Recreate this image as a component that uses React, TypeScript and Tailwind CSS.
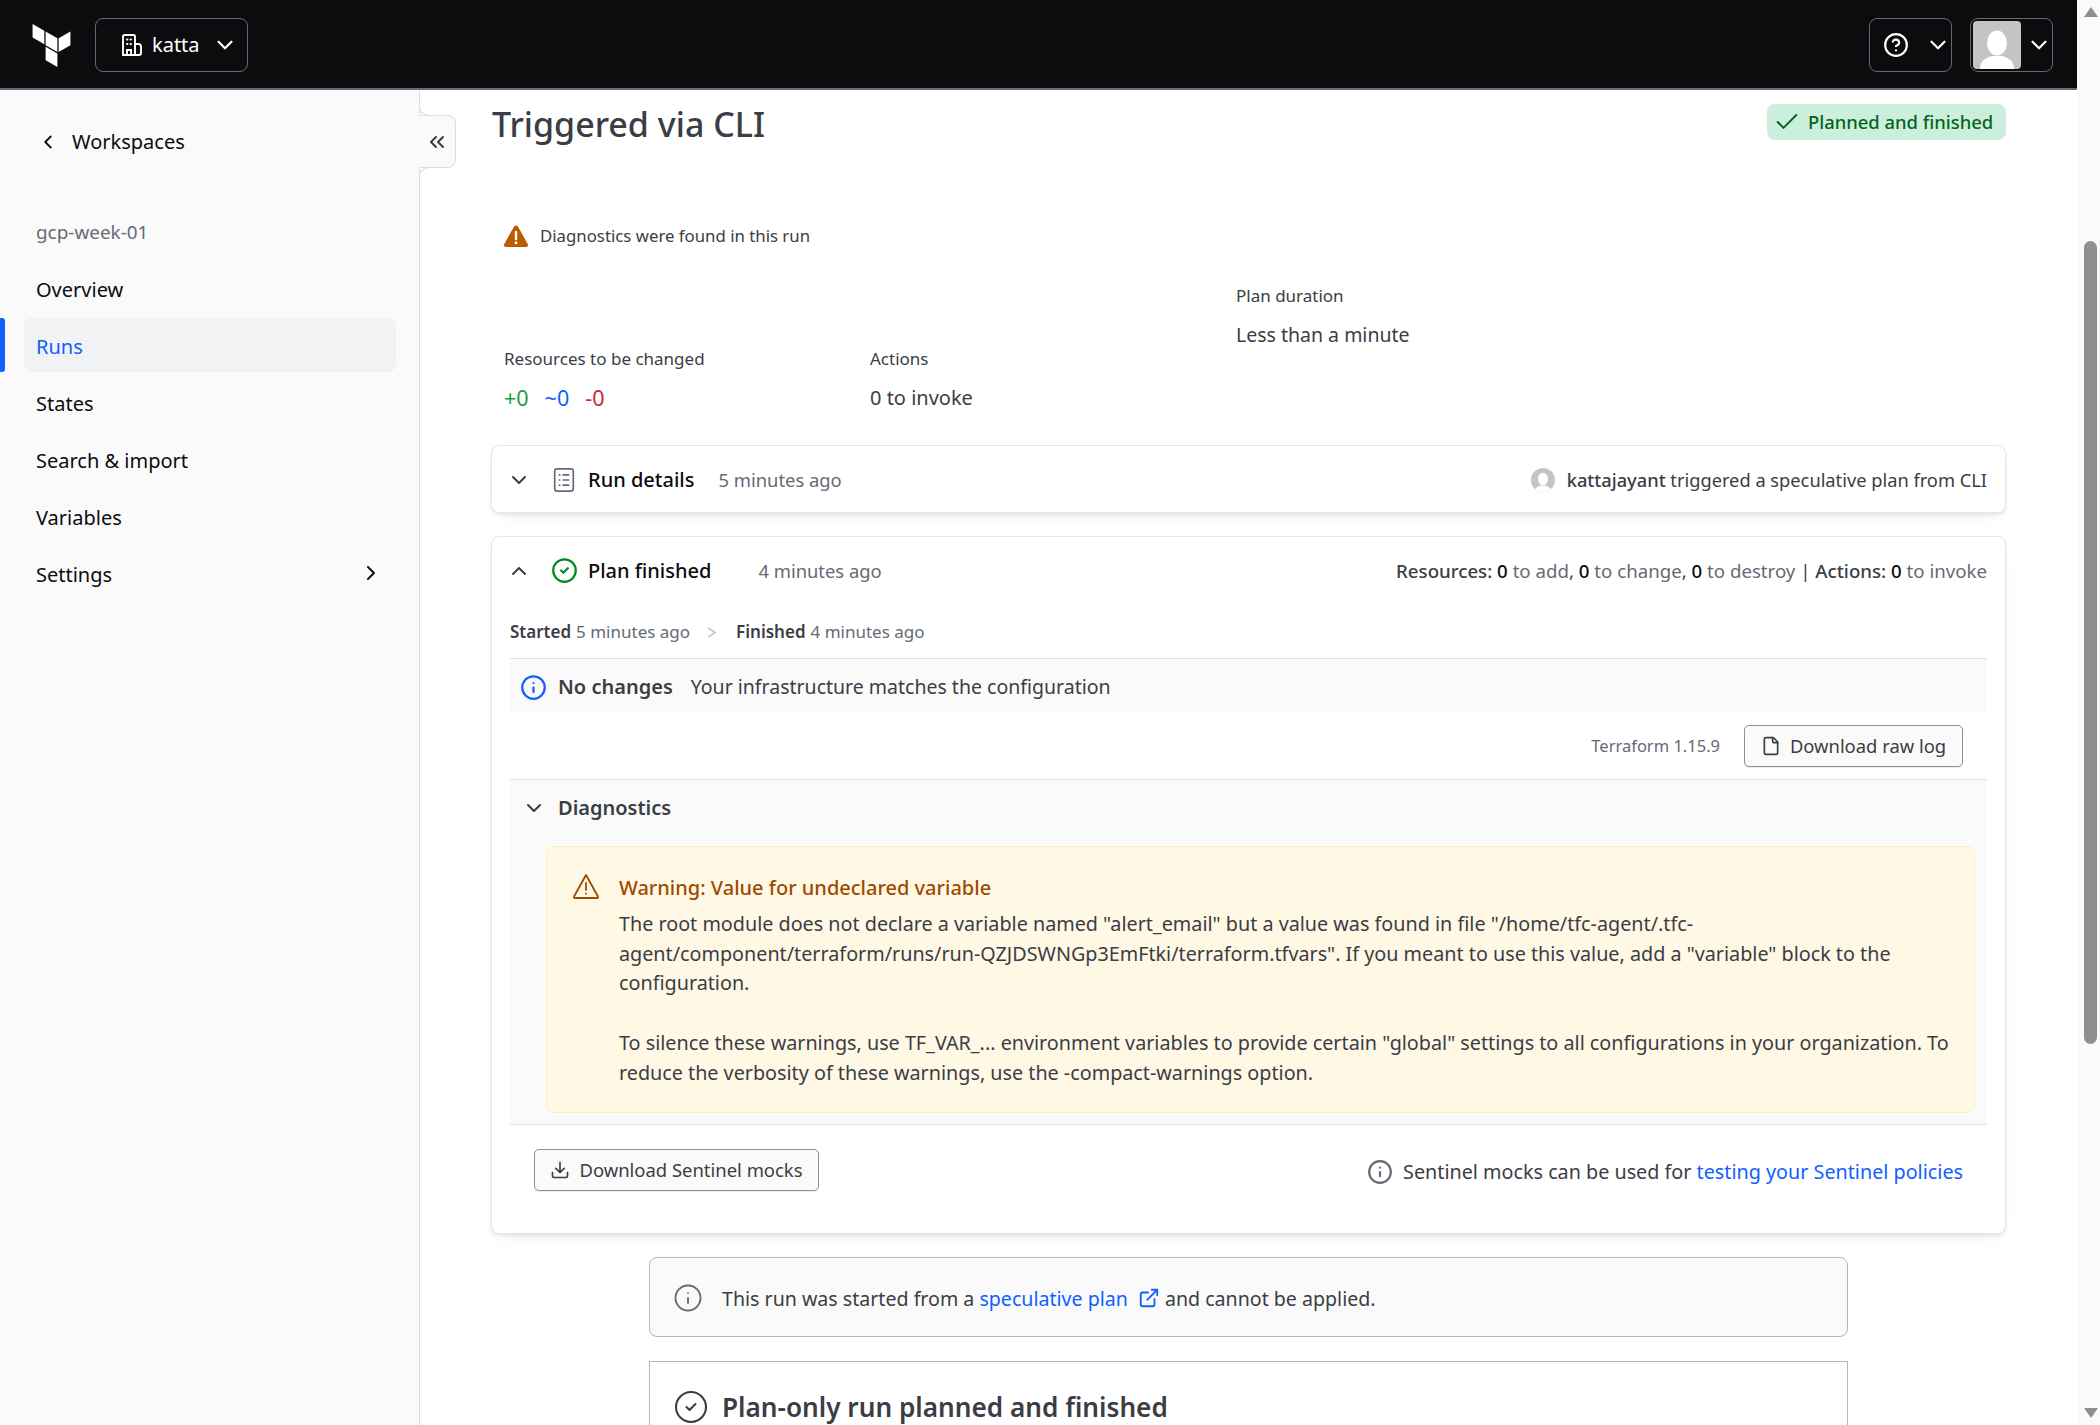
import { Check, ChevronDown, ChevronLeft, ChevronRight, ChevronUp, ChevronsLeft, CircleCheck, CircleHelp, Download, ExternalLink, File, Info } from 'lucide-react';

const navItems = ['Overview', 'Runs', 'States', 'Search & import', 'Variables', 'Settings'];

function Silhouette({ className }: { className?: string }) {
  return (
    <svg viewBox="0 0 48 48" className={className} fill="#fff">
      <ellipse cx="24" cy="22" rx="10" ry="12.5" />
      <path d="M7 48c0-8 5-11 12-13h10c7 2 12 5 12 13z" />
    </svg>
  );
}

function Header() {
  return (
    <header className="h-[90px] shrink-0 flex items-center justify-between bg-[#0c0c0e] border-b-2 border-[#656a76] pt-[2px] pl-[30px] pr-[24px]">
      <div className="flex items-center gap-[22px]">
        <svg viewBox="0 0 24 24" className="w-[43px] h-[43px]" fill="#fff">
          <path d="M1.44 0v7.575l6.561 3.79V3.787zm21.12 4.227l-6.561 3.791v7.574l6.56-3.787zM8.72 4.23v7.575l6.561 3.787V8.018zm0 8.405v7.575L15.28 24v-7.578z" />
        </svg>
        <button className="w-[153px] h-[54px] flex items-center pl-[24px] border border-[#656a76] rounded-lg text-white text-[20px]">
          <svg viewBox="0 0 24 24" className="w-[24px] h-[24px] mr-[8px]" fill="none" stroke="#fff" strokeWidth="1.9" strokeLinecap="round">
            <path d="M3 22V3.5A1.5 1.5 0 0 1 4.5 2h9A1.5 1.5 0 0 1 15 3.5V22z" />
            <path d="M15 11h3.5a2.5 2.5 0 0 1 2.5 2.5V20a2 2 0 0 1-2 2h-4" />
            <path d="M7 22v-5h4v5M7 6.500h.5M10.500 6.500h.5M7 11h.5M10.500 11h.5" />
          </svg>
          katta
          <ChevronDown className="w-[26px] h-[26px] ml-[12px]" strokeWidth={2} />
        </button>
      </div>
      <div className="flex items-center gap-[18px]">
        <button className="w-[83px] h-[54px] flex items-center pl-[13px] gap-[16px] border border-[#656a76] rounded-lg text-white">
          <CircleHelp className="w-[26px] h-[26px]" strokeWidth={2} />
          <ChevronDown className="w-[26px] h-[26px]" strokeWidth={2} />
        </button>
        <button className="w-[83px] h-[54px] flex items-center pl-[2px] gap-[5px] border border-[#656a76] rounded-lg text-white">
          <div className="w-[48px] h-[48px] bg-[#c4c4c4] rounded-[4px] overflow-hidden">
            <Silhouette className="w-[48px] h-[48px]" />
          </div>
          <ChevronDown className="w-[26px] h-[26px]" strokeWidth={2} />
        </button>
      </div>
    </header>
  );
}

function Sidebar() {
  return (
    <aside className="w-[420px] shrink-0 bg-[#fafafa] border-r border-[#dedfe3] pt-[25px] pl-[24px] pr-[23px]">
      <div className="h-[54px] flex items-center text-[20px] text-[#0c0c0e]">
        <ChevronLeft className="w-[22px] h-[22px] ml-[13px] mr-[13px]" strokeWidth={2} />
        Workspaces
      </div>
      <div className="mt-[50px] h-[26px] pl-[12px] text-[18.9px] leading-[26px] text-[#656a76]">gcp-week-01</div>
      <nav className="mt-[16px] flex flex-col gap-[3px]">
        {navItems.map((item) => (
          <div
            key={item}
            className={
              item === 'Runs'
                ? 'relative h-[54px] flex items-center px-[12px] pt-[3px] rounded-lg bg-[#f1f2f3] text-[20px] text-[#1060ff]'
                : 'h-[54px] flex items-center justify-between px-[12px] pt-[3px] rounded-lg text-[20px] text-[#0c0c0e]'
            }
          >
            {item === 'Runs' && <span className="absolute -left-[24px] top-0 w-[5px] h-[54px] rounded-r-[3px] bg-[#1060ff]" />}
            {item}
            {item === 'Settings' && <ChevronRight className="w-[24px] h-[24px] mr-[1px] mb-[3px]" strokeWidth={2} />}
          </div>
        ))}
      </nav>
    </aside>
  );
}

function CollapseTab() {
  return (
    <div className="absolute -left-[1px] top-[25px] w-[37px] h-[53px] flex items-center justify-center bg-[#fafafa] border-y border-r border-[#dedfe3] rounded-r-lg text-[#3b3d45]">
      <span className="absolute -top-[9px] left-0 w-[8px] h-[8px] bg-white border-l border-b border-[#dedfe3] rounded-bl-lg" />
      <span className="absolute -bottom-[9px] left-0 w-[8px] h-[8px] bg-white border-l border-t border-[#dedfe3] rounded-tl-lg" />
      <ChevronsLeft className="w-[24px] h-[24px]" strokeWidth={2} />
    </div>
  );
}

function Stat({ label, children, className }: { label: string; children: React.ReactNode; className?: string }) {
  return (
    <div className={className}>
      <div className="h-[26px] text-[17px] leading-[26px] text-[#3b3d45]">{label}</div>
      <div className="mt-[12px] h-[28px] text-[20px] leading-[28px] text-[#3b3d45]">{children}</div>
    </div>
  );
}

function PlanCard() {
  return (
    <section className="mt-[23px] bg-white border border-[#e5e6e9] rounded-lg shadow-[0_2px_3px_rgba(101,106,118,0.12),0_8px_16px_-10px_rgba(101,106,118,0.2)]">
      <div className="h-[69px] mx-[18px] pb-[2px] flex items-center justify-between">
        <div className="flex items-center text-[20px]">
          <ChevronUp className="w-[24px] h-[24px] ml-[-3px] text-[#3b3d45]" strokeWidth={2} />
          <CircleCheck className="w-[27px] h-[27px] ml-[20px] text-[#008a22]" strokeWidth={2} />
          <span className="ml-[10px] font-medium text-[#0c0c0e]">Plan finished</span>
          <span className="ml-[47px] text-[18.4px] text-[#656a76]">4 minutes ago</span>
        </div>
        <div className="text-[18.66px] text-[#656a76]">
          <span className="font-medium text-[#3b3d45]">Resources: </span><span className="font-medium text-[#0c0c0e]">0</span> to add<span className="text-[#3b3d45]">, </span>
          <span className="font-medium text-[#0c0c0e]">0</span> to change<span className="text-[#3b3d45]">, </span>
          <span className="font-medium text-[#0c0c0e]">0</span> to destroy <span className="text-[#3b3d45]">| </span>
          <span className="font-medium text-[#3b3d45]">Actions: </span><span className="font-medium text-[#0c0c0e]">0</span> to invoke
        </div>
      </div>

      <div className="h-[53px] mx-[18px] flex items-center border-b border-[#dedfe3] text-[17px] text-[#656a76]">
        <span className="font-semibold text-[#3b3d45] mr-[5px]">Started</span>5 minutes ago
        <svg viewBox="0 0 9 11" className="w-[9px] h-[11px] ml-[17px] mr-[20px]" fill="none" stroke="#b2b6bd" strokeWidth="1.3"><path d="M1 1l7 4.500-7 4.500" /></svg>
        <span className="font-semibold text-[#3b3d45] mr-[5px]">Finished</span>4 minutes ago
      </div>

      <div className="h-[54px] mx-[18px] pt-[2px] flex items-center bg-[#fafafa] pl-[10px] text-[20px]">
        <Info className="w-[27px] h-[27px] text-[#1060ff]" strokeWidth={2} />
        <span className="ml-[11px] font-semibold text-[#3b3d45]">No changes</span>
        <span className="ml-[18px] text-[19.5px] text-[#3b3d45]">Your infrastructure matches the configuration</span>
      </div>

      <div className="h-[66px] mx-[18px] flex items-center justify-end gap-[24px] pr-[24px]">
        <span className="text-[16.5px] text-[#656a76]">Terraform 1.15.9</span>
        <button className="h-[42px] w-[219px] flex items-center justify-center gap-[9px] bg-[#fafafa] border border-[#8c909c] rounded-[5px] shadow-[0_1px_1px_rgba(101,106,118,0.15)] text-[18.4px] text-[#3b3d45]">
          <File className="w-[20px] h-[20px]" strokeWidth={2} />
          Download raw log
        </button>
      </div>

      <div className="mx-[18px] bg-[#fafafa] border-y border-[#dedfe3] pb-[11px]">
        <div className="h-[56px] flex items-center pl-[12px]">
          <ChevronDown className="w-[24px] h-[24px] text-[#3b3d45]" strokeWidth={2} />
          <span className="ml-[12px] text-[20px] font-semibold text-[#3b3d45]">Diagnostics</span>
        </div>
        <div className="mt-[10px] ml-[36px] mr-[12px] flex gap-[19px] bg-[#fff8e5] border border-[#fdeeba] rounded-lg pl-[25px] pt-[26px] pb-[25px]">
          <svg viewBox="0 0 28 28" className="w-[28px] h-[28px] shrink-0 mt-[-1px]" fill="none" stroke="#9e4b00" strokeWidth="1.8" strokeLinejoin="round" strokeLinecap="round">
            <path d="M14 3 2 24.500a1 1 0 0 0 1 1.500h22a1 1 0 0 0 1-1.500z" />
            <path d="M14 11v7M14 21.500v.2" />
          </svg>
          <div>
            <div className="h-[30px] text-[20px] leading-[30px] font-medium text-[#9e4b00]">Warning: Value for undeclared variable</div>
            <div className="mt-[6px] text-[19.75px] leading-[29.7px] text-[#3b3d45] whitespace-nowrap">
              <div>The root module does not declare a variable named "alert_email" but a value was found in file "/home/tfc-agent/.tfc-</div>
              <div>agent/component/terraform/runs/run-QZJDSWNGp3EmFtki/terraform.tfvars". If you meant to use this value, add a "variable" block to the</div>
              <div>configuration.</div>
              <div className="h-[29.7px]" />
              <div>To silence these warnings, use TF_VAR_... environment variables to provide certain "global" settings to all configurations in your organization. To</div>
              <div>reduce the verbosity of these warnings, use the -compact-warnings option.</div>
            </div>
          </div>
        </div>
      </div>

      <div className="mx-[18px] flex items-center justify-between pt-[24px] pb-[42px] px-[24px]">
        <button className="h-[42px] w-[285px] flex items-center justify-center gap-[9px] bg-[#fafafa] border border-[#8c909c] rounded-[5px] shadow-[0_1px_1px_rgba(101,106,118,0.15)] text-[18.45px] text-[#3b3d45]">
          <Download className="w-[20px] h-[20px]" strokeWidth={2} />
          Download Sentinel mocks
        </button>
        <div className="flex items-center pt-[3px] text-[19.76px] text-[#3b3d45]">
          <Info className="w-[26px] h-[26px] mr-[10px] text-[#656a76]" strokeWidth={2} />
          Sentinel mocks can be used for&nbsp;<span className="text-[#1060ff]">testing your Sentinel policies</span>
        </div>
      </div>
    </section>
  );
}

function MainContent() {
  return (
    <main className="relative flex-1 bg-white">
      <CollapseTab />
      <div className="h-full overflow-hidden px-[71px] pt-[12px]">
        <div className="flex items-start justify-between">
          <h1 className="ml-[1px] text-[34px] leading-[44px] font-medium text-[#3b3d45]">Triggered via CLI</h1>
          <div className="mt-[2px] h-[36px] w-[239px] flex items-center pl-[6px] gap-[7px] rounded-lg bg-[#cceedd] text-[18.4px] font-medium text-[#006619]">
            <Check className="w-[28px] h-[28px]" strokeWidth={1.7} />
            Planned and finished
          </div>
        </div>

        <div className="mt-[77px] ml-[12px] h-[26px] flex items-center text-[16.8px] text-[#3b3d45]">
          <svg viewBox="0 0 26 24" className="w-[26px] h-[24px] mr-[11px]">
            <path d="M13 1.500c.8 0 1.500.4 1.900 1.100l9.800 17.300c.8 1.400-.2 3.100-1.800 3.100H3.100c-1.600 0-2.600-1.700-1.800-3.100L11.100 2.600c.4-.7 1.100-1.100 1.900-1.100z" fill="#bb5a00" />
            <path d="M13 8v7" stroke="#fff" strokeWidth="2.400" strokeLinecap="round" />
            <circle cx="13" cy="18.800" r="1.500" fill="#fff" />
          </svg>
          Diagnostics were found in this run
        </div>

        <div className="mt-[34px] ml-[13px] grid grid-cols-[366px_366px_1fr]">
          <Stat label="Resources to be changed" className="pt-[63px]">
            <div className="flex gap-[16px] text-[21.5px]">
              <span className="text-[#1f9d3f]">+0</span>
              <span className="text-[#1060ff]">~0</span>
              <span className="text-[#c9283e]">-0</span>
            </div>
          </Stat>
          <Stat label="Actions" className="pt-[63px]">0 to invoke</Stat>
          <Stat label="Plan duration"><span className="text-[19.5px]">Less than a minute</span></Stat>
        </div>

        <section className="mt-[33px] h-[68px] pt-[1px] flex items-center justify-between px-[18px] bg-white border border-[#e5e6e9] rounded-lg shadow-[0_2px_3px_rgba(101,106,118,0.12),0_8px_16px_-10px_rgba(101,106,118,0.2)]">
          <div className="flex items-center text-[20px]">
            <ChevronDown className="w-[24px] h-[24px] ml-[-3px] text-[#3b3d45]" strokeWidth={2} />
            <svg viewBox="0 0 24 28" className="w-[24px] h-[26px] ml-[21px] text-[#656a76]" fill="none" stroke="currentColor" strokeWidth="1.8" strokeLinecap="round">
              <rect x="2" y="2" width="20" height="24" rx="2.500" />
              <path d="M7 8.500h.5M11 8.500h6M7 14h.5M11 14h6M7 19.500h.5M11 19.500h6" />
            </svg>
            <span className="ml-[12px] font-medium text-[#0c0c0e]">Run details</span>
            <span className="ml-[24px] text-[18.4px] text-[#656a76]">5 minutes ago</span>
          </div>
          <div className="flex items-center text-[18.25px] text-[#3b3d45]">
            <div className="w-[24px] h-[24px] rounded-full bg-[#c4c4c4] overflow-hidden mr-[12px]">
              <Silhouette className="w-[24px] h-[24px]" />
            </div>
            <span className="font-medium">kattajayant</span>&nbsp;triggered a speculative plan from CLI
          </div>
        </section>

        <PlanCard />

        <div className="mt-[23px] mx-[158px] h-[80px] pt-[2px] flex items-center pl-[23px] bg-[#fafafa] border border-[#b2b6bd] rounded-lg text-[19.6px] text-[#3b3d45]">
          <Info className="w-[30px] h-[30px] mr-[19px] text-[#656a76]" strokeWidth={1.5} />
          This run was started from a&nbsp;<span className="text-[#1060ff]">speculative plan</span>
          <ExternalLink className="w-[22px] h-[22px] ml-[10px] mr-[5px] text-[#1060ff]" strokeWidth={2} />
          and cannot be applied.
        </div>

        <div className="mt-[24px] mx-[158px] h-[100px] flex items-start pt-[27px] pl-[23px] bg-white border border-[#b2b6bd]">
          <CircleCheck className="w-[36px] h-[36px] mr-[13px] text-[#3b3d45]" strokeWidth={1.4} />
          <span className="text-[26.2px] leading-[36px] font-semibold text-[#3b3d45]">Plan-only run planned and finished</span>
        </div>
      </div>
    </main>
  );
}

function Scrollbar() {
  return (
    <div className="w-[23px] shrink-0 bg-[#fafafa] flex flex-col items-center justify-between pl-[4px] py-[7px]">
      <svg viewBox="0 0 14 10" className="w-[14px] h-[10px]" fill="#8f8f8f"><path d="M7 0l7 10H0z" /></svg>
      <div className="w-[13px] h-[803px] rounded-full bg-[#8f8f8f] mt-[214px] mb-[354px]" />
      <svg viewBox="0 0 14 10" className="w-[14px] h-[10px]" fill="#8f8f8f"><path d="M7 10L0 0h14z" /></svg>
    </div>
  );
}

export default function App() {
  return (
    <div className="h-[1425px] flex overflow-hidden bg-white font-['Noto_Sans',sans-serif]">
      <div className="flex-1 min-w-0 flex flex-col">
        <Header />
        <div className="flex-1 min-h-0 flex">
          <Sidebar />
          <MainContent />
        </div>
      </div>
      <Scrollbar />
    </div>
  );
}
